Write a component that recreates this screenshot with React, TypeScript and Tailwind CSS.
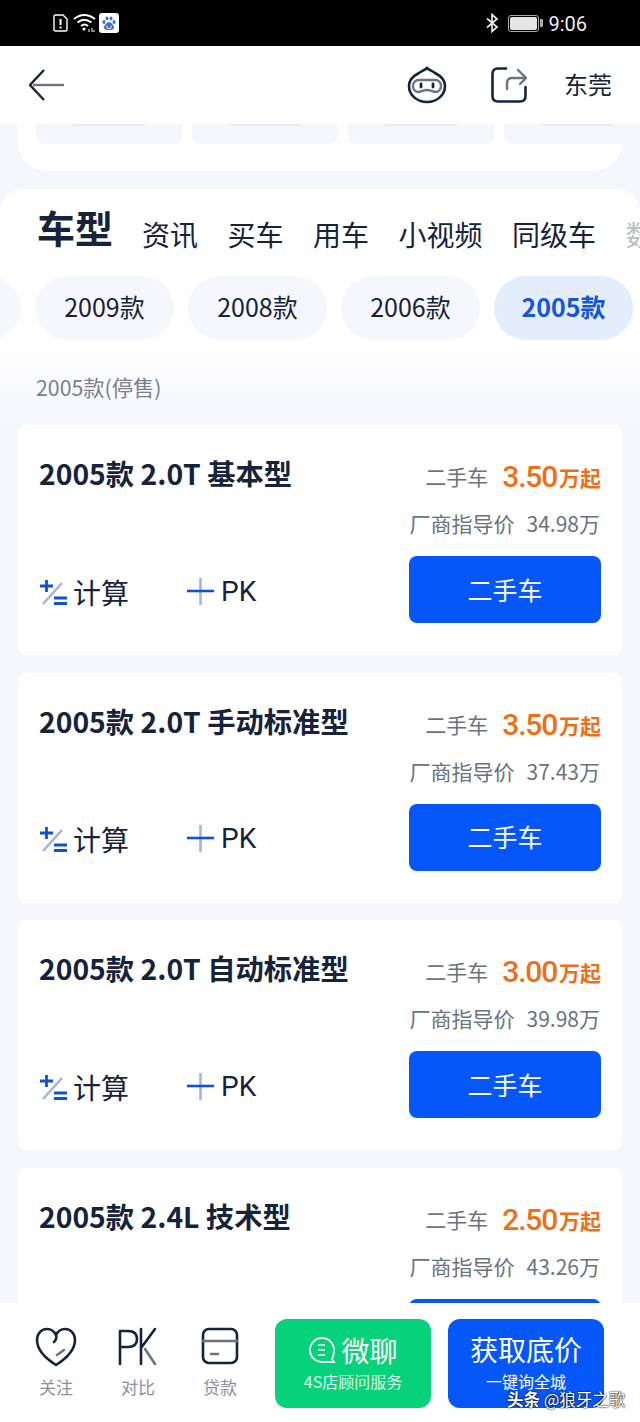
const font = { fontFamily: '"Noto Sans CJK SC", Roboto, sans-serif' };

const cars = [
  { name: "2005款 2.0T 基本型", price: "3.50", guide: "34.98万" },
  { name: "2005款 2.0T 手动标准型", price: "3.50", guide: "37.43万" },
  { name: "2005款 2.0T 自动标准型", price: "3.00", guide: "39.98万" },
  { name: "2005款 2.4L 技术型", price: "2.50", guide: "43.26万" },
];

function CarCard({ car }: { car: (typeof cars)[number] }) {
  return (
    <div className="mb-[17.67px] h-[230px] shrink-0 rounded-lg bg-white pl-[21px] pr-[21px] pt-[29px]">
      <div className="flex justify-between">
        <div className="text-[28.300px] font-bold leading-[38px] text-[#16233a]">{car.name}</div>
        <div className="flex items-center pt-1 leading-[38px]">
          <span className="mr-[14px] -mt-[2px] text-[21px] text-[#6b7280]">二手车</span>
          <span className="text-[30px] font-medium tracking-[-1.2px] text-[#ee6f16] [font-family:Roboto]">{car.price}</span>
          <span className="ml-[2px] text-[21px] font-bold text-[#ee6f16]">万起</span>
        </div>
      </div>
      <div className="mt-[11px] flex justify-end gap-[12px] pr-[1px] text-[21px] leading-[32px] text-[#6b7280]">
        <span>厂商指导价</span>
        <span>{car.guide}</span>
      </div>
      <div className="mt-[17px] flex items-center justify-between">
        <div className="flex items-center pt-1 text-[#16233a]">
          <svg width="28" height="28" viewBox="0 0 28 28" fill="none" className="ml-[1px] mr-[5px]">
            <path d="M3 26 22 5" stroke="#9fb4ea" strokeWidth="2.6" />
            <path d="M0 8h13M6.500 2v12M14 20h13M14 25.500h13" stroke="#0f52d8" strokeWidth="2.800" />
          </svg>
          <span className="w-[114px] text-[28px] leading-[36px]">计算</span>
          <svg width="28" height="28" viewBox="0 0 28 28" fill="none" className="mr-[6px]">
            <path d="M13.500 0v27" stroke="#9fb4ea" strokeWidth="2.600" />
            <path d="M0 13h27" stroke="#0f52d8" strokeWidth="2.600" />
          </svg>
          <span className="text-[28px] leading-[36px] [font-family:Roboto]">PK</span>
        </div>
        <div className="flex h-[67px] w-[192px] items-center justify-center rounded-lg bg-[#0657f9] text-[25px] text-white">
          二手车
        </div>
      </div>
    </div>
  );
}

function BottomItem({ label, children }: { label: string; children: React.ReactNode }) {
  return (
    <div className="flex w-[82px] flex-col items-center">
      <svg width="42" height="40" viewBox="0 0 42 40" fill="none" strokeWidth="2.6" strokeLinecap="round" strokeLinejoin="round">
        {children}
      </svg>
      <span className="mt-[7px] text-[17px] leading-[26px] text-[#8b9099]">{label}</span>
    </div>
  );
}

export default function App() {
  return (
    <div className="flex h-[1422px] w-[640px] flex-col overflow-hidden bg-[#f5f7fd]" style={font}>
      <div className="flex h-[46px] shrink-0 items-center bg-black pl-[53px] pr-[53px] text-white">
        <svg width="15" height="18" viewBox="0 0 15 18" fill="none">
          <path d="M1 2.500Q1 1 2.500 1H10l4 4v10.500Q14 17 12.500 17h-10Q1 17 1 15.500Z" stroke="#fff" strokeWidth="1.400" />
          <path d="M7.500 5v6M7.500 12.500v2" stroke="#fff" strokeWidth="2" />
        </svg>
        <svg width="24" height="20" viewBox="0 0 24 20" fill="none" className="ml-[5px]">
          <path d="M1 6Q11-2 22 6M4.500 9.500Q11 4 18.500 9.500M8 13Q11.500 10 15 13" stroke="#fff" strokeWidth="1.800" />
          <circle cx="11" cy="16" r="1.600" fill="#fff" />
          <path d="M16 19v-3M19 19v-4M21 19v-2" stroke="#fff" strokeWidth="1" />
        </svg>
        <div className="ml-[2px] flex h-5 w-5 items-center justify-center rounded-[3px] bg-white">
          <svg width="16" height="16" viewBox="0 0 16 16" fill="#3f6fd0">
            <ellipse cx="3" cy="7" rx="1.500" ry="2" />
            <ellipse cx="6" cy="3.500" rx="1.500" ry="2" />
            <ellipse cx="10" cy="3.500" rx="1.500" ry="2" />
            <ellipse cx="13" cy="7" rx="1.500" ry="2" />
            <path d="M8 7c-2 0-5 3.500-5 5.500S5 15 8 15s5-.5 5-2.500S10 7 8 7Z" />
            <path d="M6 10.500v2q0 1 1 1h2q1 0 1-1v-2" stroke="#fff" strokeWidth="0.900" fill="none" />
          </svg>
        </div>
        <div className="flex-1" />
        <svg width="14" height="20" viewBox="0 0 14 20" fill="none">
          <path d="M2 5.500 12 14l-5 4.500v-17L12 6 2 14.500" stroke="#e8e8e8" strokeWidth="1.700" />
        </svg>
        <div className="ml-[9px] flex h-[17px] w-[31px] items-center rounded-[3px] border border-[#aaa] p-[1px]">
          <div className="h-full w-full rounded-[2px] bg-[#e6e6e6]" />
        </div>
        <div className="ml-[1px] h-[8px] w-[3px] rounded-r-[1px] bg-[#aaa]" />
        <span className="ml-[5px] mt-[2px] text-[20px] leading-none text-[#ececec] [font-family:Roboto]">9:06</span>
      </div>

      <div className="relative z-10 flex h-[78px] shrink-0 items-center bg-white pl-[29px] pr-[28px]">
        <svg width="36" height="32" viewBox="0 0 36 32" fill="none">
          <path d="M15 1 1 16l14 15" stroke="#16233a" strokeWidth="2.400" />
          <path d="M4 16h31" stroke="#6d7480" strokeWidth="2.400" />
        </svg>
        <div className="flex-1" />
        <svg width="40" height="38" viewBox="0 0 40 38" fill="none">
          <path d="M20 2c2 2 5 3 8 5 6 3 10 8 10 13 0 9-8 16-18 16S2 29 2 20c0-5 4-10 10-13 3-2 6-3 8-5Z" stroke="#16233a" strokeWidth="2.600" />
          <path d="M12 14h16c4 0 6 3 6 6s-2 6-5 6c-3 0-5-2-9-2s-6 2-9 2c-3 0-5-3-5-6s2-6 6-6Z" stroke="#6d7480" strokeWidth="2.400" />
          <path d="M14 18v3M26 18v3" stroke="#16233a" strokeWidth="2.800" strokeLinecap="round" />
        </svg>
        <svg width="36" height="36" viewBox="0 0 36 36" fill="none" className="ml-[44px]">
          <path d="M15 1.500H7Q1.500 1.500 1.500 7v22Q1.500 34.500 7 34.500h22q5.500 0 5.500-5.500v-9" stroke="#16233a" strokeWidth="2.600" strokeLinecap="round" />
          <path d="M16 22v-6q0-5 5-5h13M27 3l8 8-6 6" stroke="#6d7480" strokeWidth="2.400" strokeLinecap="round" />
        </svg>
        <span className="mb-[2px] ml-[37px] text-[24px] text-[#16233a]">东莞</span>
      </div>

      <div className="flex min-h-0 flex-1 flex-col">
        {/* card above is scrolled under the header, only its bottom shows */}
        <div className="mx-[18px] flex h-[47px] shrink-0 gap-[10px] rounded-b-[28px] bg-white pl-[18px]">
          {[0, 1, 2, 3].map((i) => (
            <div key={i} className="flex h-[20px] w-[146px] shrink-0 justify-center rounded-b-lg bg-[#f5f7fc]">
              <div className="h-[2px] w-[72px] bg-[#e9ebf0]" />
            </div>
          ))}
        </div>

        <div className="mt-[18px] flex min-h-0 flex-1 flex-col rounded-t-[24px] bg-gradient-to-b from-white from-[14%] to-[#f5f7fd] to-[21%] pt-[12px]">
          <div className="flex h-[52px] shrink-0 items-end overflow-hidden whitespace-nowrap pl-[37px] text-[28px] leading-[38px] text-[#16233a]">
            <span className="mr-[29px] text-[38px] font-bold leading-[52px]">车型</span>
            <div className="flex gap-[29.5px]">
              <span>资讯</span>
              <span>买车</span>
              <span>用车</span>
              <span>小视频</span>
              <span>同级车</span>
              <span className="text-[#b9bdc6]">数据</span>
            </div>
          </div>
          <div className="mt-[23px] flex h-[64px] shrink-0 -ml-[118px] gap-[14px]">
            {["2010款", "2009款", "2008款", "2006款"].map((y) => (
              <div key={y} className="flex w-[139px] shrink-0 items-center justify-center rounded-full bg-[#f5f7fc] pb-[2px] text-[25px] text-[#16233a]">
                {y === "2010款" ? "" : y}
              </div>
            ))}
            <div className="flex w-[139px] shrink-0 items-center justify-center rounded-full bg-[#e4edfb] pb-[2px] text-[25px] font-semibold text-[#1557d6]">
              2005款
            </div>
          </div>
          <div className="mt-[32px] h-[30px] shrink-0 pl-[36px] text-[21.300px] leading-[30px] text-[#7a8089]">2005款(停售)</div>
          <div className="mt-[23px] flex min-h-0 flex-1 flex-col overflow-hidden px-[18px]">
            {cars.map((c) => (
              <CarCard key={c.name} car={c} />
            ))}
          </div>
        </div>
      </div>

      <div className="relative flex h-[119px] shrink-0 items-start bg-white pl-[15px] pt-[16px]">
        <div className="flex pt-[8px]">
          <BottomItem label="关注">
            <path d="M21 38C10 31 2 23 2 13 2 6 7 2 12 2c4 0 7 2 9 6 2-4 5-6 9-6 5 0 10 4 10 11 0 10-8 18-19 25Z" stroke="#16233a" />
            <path d="M21 8c1 3 0 5-2 7" stroke="#16233a" />
            <path d="M22 28l7-5" stroke="#6d7480" />
          </BottomItem>
          <BottomItem label="对比">
            <path d="M3 37V4h8c6 0 9 3 9 8s-3 8-9 8H3" stroke="#16233a" />
            <path d="M24 2v35M38 2 24 21" stroke="#16233a" />
            <path d="M28 22l10 15" stroke="#6d7480" />
          </BottomItem>
          <BottomItem label="贷款">
            <rect x="4" y="2" width="34" height="34" rx="6" stroke="#16233a" />
            <path d="M4 14h34" stroke="#6d7480" />
            <path d="M12 27h7" stroke="#6d7480" />
          </BottomItem>
        </div>
        <div className="ml-[14px] flex h-[89px] w-[156px] flex-col items-center rounded-xl bg-[#06d27c] pt-[11px] text-white">
          <div className="flex items-center">
            <svg width="28" height="28" viewBox="0 0 28 28" fill="none" className="mr-[5px]">
              <path d="M26 14a12 12 0 1 0-12 12h12l-2-3c1-2 2-6 2-9Z" stroke="#fff" strokeWidth="1.800" />
              <path d="M10 9h7M10 14h7M10 19h7" stroke="#fff" strokeWidth="1.600" />
            </svg>
            <span className="text-[28px] leading-[40px]">微聊</span>
          </div>
          <span className="-mt-[1px] text-[16px] leading-[24px] text-[#dff9ec]">4S店顾问服务</span>
        </div>
        <div className="ml-[17px] flex h-[89px] w-[156px] flex-col items-center rounded-xl bg-[#0657f9] pt-[10px] text-white">
          <span className="text-[28px] leading-[40px]">获取底价</span>
          <span className="text-[16px] leading-[24px]">一键询全城</span>
        </div>
        <span className="absolute left-[507px] top-[86px] whitespace-nowrap text-[16.500px] leading-[20px] text-white [text-shadow:0_0_2px_#000,0_0_1px_#000]">
          <b>头条</b> @狼牙之歌
        </span>
      </div>
    </div>
  );
}
